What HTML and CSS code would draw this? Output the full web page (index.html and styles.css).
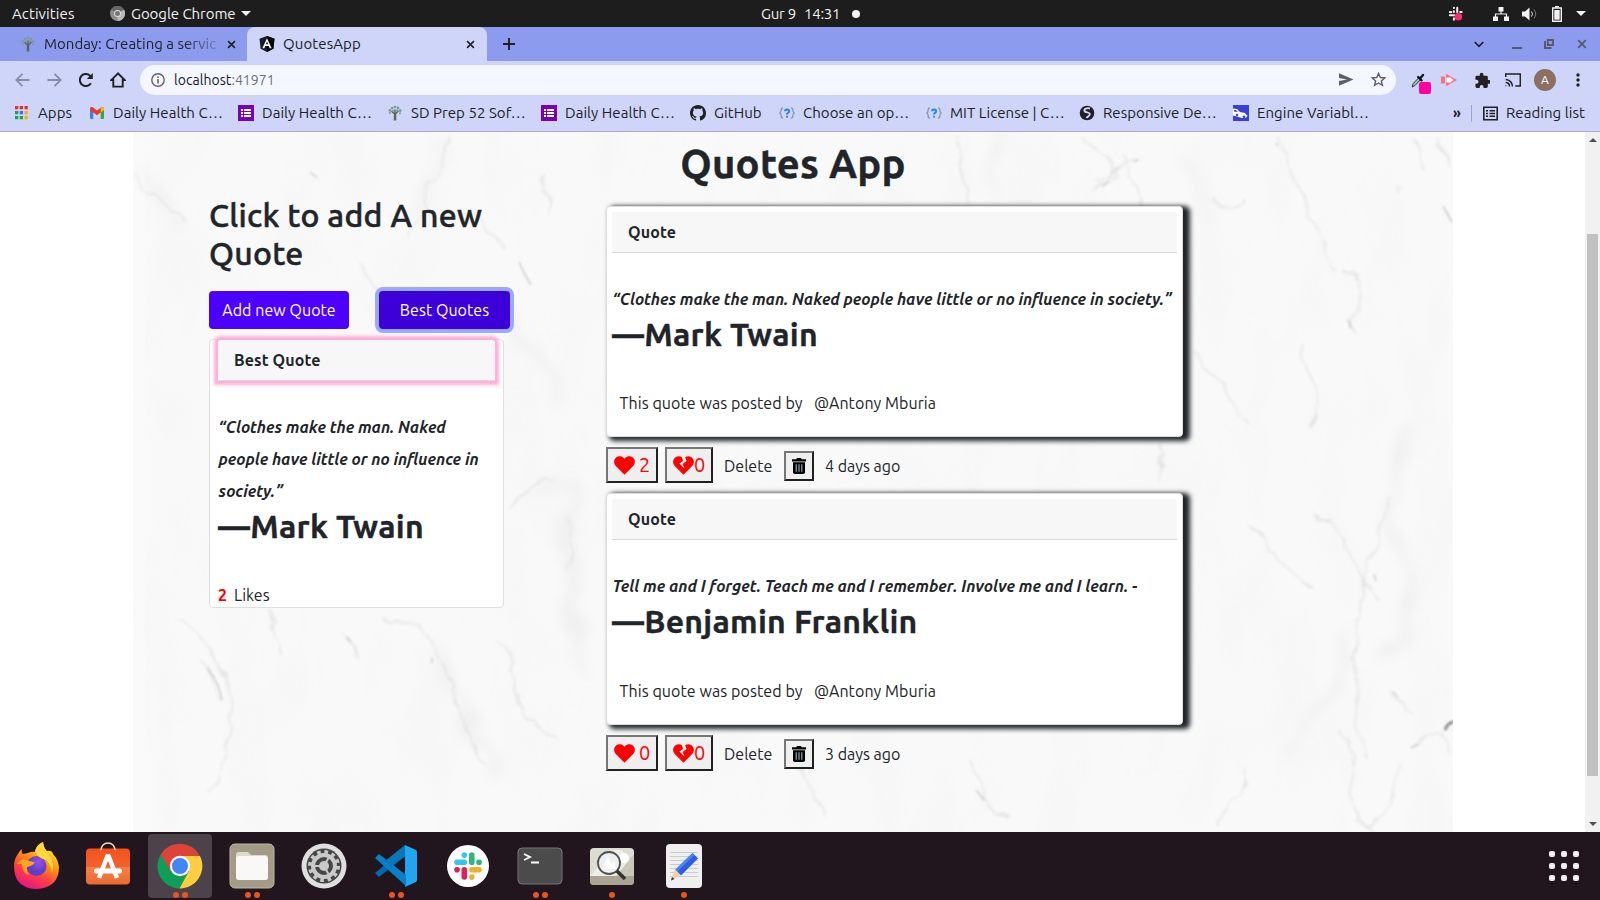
FILE: index.html
```html
<!DOCTYPE html>
<html lang="en">
<head>
<meta charset="utf-8">
<title>QuotesApp</title>
<link rel="stylesheet" href="styles.css">
</head>
<body>
<svg width="0" height="0" class="defs">
  <defs>
    <symbol id="tree" viewBox="0 0 16 16"><path d="M7.4 15.5 7.6 9 4.5 6.2M8.6 15.5 8.5 9l3-3.2M8 9V4.5" fill="none" stroke="#56665f" stroke-width="1.4"/><g fill="#7d9b92"><circle cx="3" cy="5.4" r="1.4"/><circle cx="5.2" cy="3" r="1.3"/><circle cx="8" cy="2" r="1.3"/><circle cx="11" cy="3" r="1.4"/><circle cx="13.2" cy="5.6" r="1.4"/><circle cx="2.8" cy="8" r="1"/><circle cx="13" cy="8.2" r="1"/><circle cx="6.2" cy="5.6" r="1"/><circle cx="10" cy="5.6" r="1.1"/></g></symbol>
    <symbol id="forms" viewBox="0 0 16 16"><path fill="#7700b8" d="M0 0h16v16H0z"/><path fill="#fff" d="M3 4h2v2H3zm3 0h7v2H6zM3 7h2v2H3zm3 0h7v2H6zM3 10h2v2H3zm3 0h7v2H6z"/></symbol>
    <symbol id="tag" viewBox="0 0 16 16"><path d="M4 2.8c-1.6 0-1.8.6-1.8 2S2 7.500.7 8c1.300.5 1.500 1.600 1.500 3.100s.2 2.100 1.800 2.100M12 2.800c1.600 0 1.800.6 1.800 2s.2 2.700 1.500 3.200c-1.300.5-1.500 1.600-1.500 3.100s-.2 2.100-1.800 2.100" fill="none" stroke="#8b93a8" stroke-width="1.300"/><path d="M6 6.300C6 3.800 10.200 3.800 10.200 6.200 10.200 7.800 8 7.700 8 9.500M8 10.700v1.800" fill="none" stroke="#2487e8" stroke-width="2"/></symbol>
    <symbol id="x" viewBox="0 0 10 10"><path d="m1.200 1.200 7.600 7.600m0-7.600L1.200 8.800" stroke="currentColor" stroke-width="1.800" fill="none"/></symbol>
    <symbol id="heart" viewBox="0 0 22 20"><path fill="red" d="M11 19.800 1.900 10.600C-.7 7.800-.4 3.600 2.200 1.500 4.700-.5 8.300-.1 10.300 2.100L11 2.900l.7-.8c2-2.200 5.600-2.600 8.100-.6 2.600 2.100 2.900 6.300.3 9.100z"/></symbol>
    <symbol id="broken" viewBox="0 0 22 20"><path fill="red" d="M11 19.800 1.900 10.600C-.7 7.800-.4 3.600 2.200 1.500 4.300-.2 7-.2 9.100 1L10.600 5 6.800 8l5.400 5.500-2-5 4-3.200L12.700 1.200c2-1.500 5.100-1.400 7.100.3 2.600 2.100 2.900 6.300.3 9.100z"/></symbol>
    <symbol id="trash" viewBox="0 0 14 16"><path d="M0 1.200h4.200L5 0h4l.8 1.200H14V3.400H0z"/><path d="M1 4.300h12v9.900q0 1.800-1.800 1.800H2.800Q1 16 1 14.200z"/><path d="M4.200 6.300v7.500M7 6.300v7.500M9.800 6.300v7.500" stroke="#9db4c8" stroke-width="1.100"/></symbol>
  </defs>
</svg>

<div class="desktop">
  <header class="topbar">
    <span class="activities">Activities</span>
    <svg class="mini-chrome" width="15" height="15" viewBox="0 0 16 16"><circle cx="8" cy="8" r="8" fill="#8d8d8d"/><path d="M8 8 1.100 4A8 8 0 0 1 15 4z" fill="#666"/><path d="M8 8l7-4a8 8 0 0 1-7 12z" fill="#b9b9b9"/><circle cx="8" cy="8" r="3.700" fill="#ddd"/><circle cx="8" cy="8" r="2.700" fill="#777"/></svg>
    <span class="appname">Google Chrome</span>
    <i class="caret"></i>
    <span class="date">Gur 9</span>
    <span class="clock">14:31</span>
    <i class="dot"></i>
    <svg class="tray-slack" width="16" height="16" viewBox="0 0 17 17"><g stroke="#eee" stroke-width="2.200" stroke-linecap="round"><path d="M6.300 5.500v1M9.800 2v4.500M6.300 2v.1M2 6.500h1.500M13 6.300h1.500M2 9.800h4.500M6.300 13v1.500"/></g><circle cx="11" cy="11.500" r="4" fill="#ff2d6e"/></svg>
    <svg width="16" height="14" viewBox="0 0 16 14"><path d="M5.500 0h5v4.500h-5zM0 9.500h5V14H0zM11 9.500h5V14h-5z" fill="#f2f2f2"/><path d="M8 4v3M2.500 10V7h11v3" stroke="#f2f2f2" fill="none" stroke-width="1.200"/></svg>
    <svg width="15" height="14" viewBox="0 0 15 14"><path d="M0 4.500h3L7.500.5v13L3 9.500H0z" fill="#f2f2f2"/><path d="M9.500 4.500q2 2.500 0 5" stroke="#ddd" fill="none"/><path d="M12 2.500q3.500 4.500 0 9" stroke="#777" fill="none"/></svg>
    <svg width="10" height="16" viewBox="0 0 10 16"><path d="M3 0h4v1.500H3z" fill="#f2f2f2"/><path d="M.7 2h8.600v13.300H.7z" fill="none" stroke="#f2f2f2" stroke-width="1.400"/><path d="M2.300 4h5.400v9.700H2.300z" fill="#f2f2f2"/></svg>
    <i class="caret"></i>
  </header>

  <div class="tabstrip">
    <div class="tab">
      <svg width="16" height="16"><use href="#tree"/></svg>
      <span class="tab-title fade">Monday: Creating a servic</span>
      <svg class="close" width="9" height="9"><use href="#x"/></svg>
    </div>
    <div class="tab active">
      <svg width="16" height="16" viewBox="0 0 16 16"><path d="M8 0l7.500 2.700-1.100 10L8 16l-6.400-3.300-1.100-10z" fill="#171c26"/><path d="M8 0v16l6.400-3.300 1.100-10z" fill="#05070a"/><path d="M8 2.200 3.400 12.300h1.900l.9-2.300h3.600l.9 2.300h1.900zM6.900 8.300 8 5.600l1.100 2.700z" fill="#fff" fill-rule="evenodd"/></svg>
      <span class="tab-title">QuotesApp</span>
      <svg class="close" width="9" height="9"><use href="#x"/></svg>
    </div>
    <svg class="plus" width="12" height="12" viewBox="0 0 12 12"><path d="M6 0v12M0 6h12" stroke="#202124" stroke-width="1.900"/></svg>
    <div class="winctl">
      <svg width="10" height="7" viewBox="0 0 10 7"><path d="m.7 1 4.300 4.300L9.300 1" fill="none" stroke="#202124" stroke-width="1.700"/></svg>
      <svg class="min" width="10" height="10" viewBox="0 0 10 10"><path d="M0 8h10v2H0z" fill="#555a6b"/></svg>
      <svg width="10" height="10" viewBox="0 0 10 10"><path d="M3.800 1h5.200v5H3.800z" fill="none" stroke="#555a6b" stroke-width="1.900"/><path d="M1 2v7h6.500" fill="none" stroke="#555a6b" stroke-width="1.900"/></svg>
      <svg class="wx" width="10" height="10"><use href="#x"/></svg>
    </div>
  </div>

  <div class="toolbar">
    <svg width="15" height="14" viewBox="0 0 15 14"><path d="M14.500 7H1.500M7.500.8 1.300 7l6.200 6.200" fill="none" stroke="#868da6" stroke-width="1.800"/></svg>
    <svg width="15" height="14" viewBox="0 0 15 14"><path d="M.5 7h13M7.500.8 13.700 7l-6.200 6.200" fill="none" stroke="#868da6" stroke-width="1.800"/></svg>
    <svg width="14" height="14" viewBox="0 0 14 14"><path d="M11.900 10.200A6 6 0 1 1 11.500 3.200" fill="none" stroke="#202124" stroke-width="2"/><path d="M13.800 0v6H7.800z" fill="#202124"/></svg>
    <svg width="16" height="16" viewBox="0 0 16 16"><path d="M8 1.400 1.300 8H3.300v6.600h9.400V8h2z" fill="none" stroke="#202124" stroke-width="1.900"/></svg>
    <div class="omnibox">
      <svg width="14" height="14" viewBox="0 0 14 14"><circle cx="7" cy="7" r="6.200" fill="none" stroke="#5f6368" stroke-width="1.400"/><path d="M7 6v4.500M7 3.500V5" stroke="#5f6368" stroke-width="1.600"/></svg>
      <span class="url">localhost<span class="port">:41971</span></span>
      <svg width="15" height="13" viewBox="0 0 15 13"><path d="M0 .3 14.500 6.500 0 12.700V8l8-1.500L0 5z" fill="#5a5e66"/></svg>
      <svg class="star" width="15" height="15" viewBox="0 0 15 15"><path d="m7.500 1.400 1.800 4.100 4.500.4-3.400 3 1 4.400-3.900-2.300-3.900 2.300 1-4.400-3.400-3 4.500-.4z" fill="none" stroke="#5a5e66" stroke-width="1.400"/></svg>
    </div>
    <div class="exts">
      <svg width="20" height="22" viewBox="0 0 20 22"><path d="m1.200 15 1-3.500L7.500 6l1.800 1.800L4 13.500z" fill="#9cc5ae" stroke="#263b30"/><path d="m7.200 5 3.300 3.300M9.500 6 12 3" stroke="#15151c" stroke-width="2.400" stroke-linecap="round"/><rect x="8" y="10" width="12" height="12" rx="2" fill="#ff00a0"/></svg>
      <svg width="16" height="14" viewBox="0 0 16 14"><path d="M0 3.500h4v7H0z" fill="#ff7075"/><path d="M5 .8 16 7 5 13.200z" fill="#ff7075"/><path d="M5.500 4.500h3V3.800L12.500 7l-4 3.200V9.500h-3z" fill="#fff"/></svg>
      <svg width="16" height="16" viewBox="0 0 22 22"><path fill="#202124" d="M20.500 11H19V7a2 2 0 0 0-2-2h-4V3.500a2.500 2.500 0 0 0-5 0V5H4a2 2 0 0 0-2 2v3.800h1.500a2.700 2.700 0 0 1 0 5.400H2V20a2 2 0 0 0 2 2h3.800v-1.500a2.700 2.700 0 0 1 5.400 0V22H17a2 2 0 0 0 2-2v-4h1.500a2.500 2.500 0 0 0 0-5"/></svg>
      <svg width="16" height="14" viewBox="0 0 16 14"><path d="M.7 4V1h14.600v12h-5M.7 12.500v.8M.7 9.500a4 4 0 0 1 3.800 4M.7 6.500a7 7 0 0 1 6.800 7" fill="none" stroke="#202124" stroke-width="1.500"/></svg>
      <span class="avatar">A</span>
      <svg class="kebab" width="4" height="14" viewBox="0 0 4 14"><g fill="#202124"><circle cx="2" cy="2" r="1.700"/><circle cx="2" cy="7" r="1.700"/><circle cx="2" cy="12" r="1.700"/></g></svg>
    </div>
  </div>

  <nav class="bookmarks">
    <a class="bm apps"><svg width="16" height="16" viewBox="0 0 16 16"><g><path fill="#e8321f" d="M2 1h3.300v3.300H2zM6.700 1H10v3.300H6.700zM11.500 1h3.300v3.300h-3.300z"/><path fill="#1fa34a" d="M2 6h3.300v3.300H2zM2 11h3.300v3.300H2z"/><path fill="#3d6df0" d="M6.700 6H10v3.300H6.700z"/><path fill="#1fa34a" d="M6.700 11H10v3.300H6.700z"/><path fill="#f6b300" d="M11.500 6h3.300v3.300h-3.300zM11.500 11h3.300v3.300h-3.300z"/></g></svg><span>Apps</span></a>
    <a class="bm"><svg width="16" height="16" viewBox="0 0 16 16"><path fill="#3f7df0" d="M1 4.500 4.300 7v7H2q-1 0-1-1z"/><path fill="#2ba84f" d="M15 4.500 11.700 7v7H14q1 0 1-1z"/><path fill="#e9392a" d="M1 5V3.500C1 2 2.600 1.500 3.700 2.300L8 5.500l4.300-3.200C13.400 1.500 15 2 15 3.500V5L8 10.200z"/><path fill="#fbbc04" d="M11.700 2.700C13 1.500 15 2 15 3.500V5l-3.300 2.500z"/></svg><span>Daily Health C…</span></a>
    <a class="bm"><svg width="16" height="16"><use href="#forms"/></svg><span>Daily Health C…</span></a>
    <a class="bm"><svg width="16" height="16"><use href="#tree"/></svg><span>SD Prep 52 Sof…</span></a>
    <a class="bm"><svg width="16" height="16"><use href="#forms"/></svg><span>Daily Health C…</span></a>
    <a class="bm"><svg width="16" height="16" viewBox="0 0 16 16"><path fill="#202124" d="M8 0C3.580 0 0 3.580 0 8c0 3.540 2.290 6.530 5.470 7.590.4.070.55-.17.55-.38 0-.19-.01-.82-.01-1.490-2.010.37-2.530-.49-2.690-.94-.09-.23-.48-.94-.82-1.130-.28-.15-.68-.52-.01-.53.63-.01 1.080.58 1.230.82.72 1.210 1.870.87 2.330.66.07-.52.28-.87.51-1.070-1.780-.2-3.640-.89-3.640-3.950 0-.87.31-1.590.82-2.150-.08-.2-.36-1.020.08-2.120 0 0 .67-.21 2.200.82.64-.18 1.320-.27 2-.27s1.360.09 2 .27c1.530-1.040 2.200-.82 2.200-.82.44 1.100.16 1.920.08 2.120.51.56.82 1.270.82 2.150 0 3.070-1.870 3.750-3.650 3.950.29.25.54.73.54 1.480 0 1.070-.01 1.930-.01 2.200 0 .21.15.46.55.38A8.010 8.010 0 0 0 16 8c0-4.420-3.580-8-8-8"/></svg><span>GitHub</span></a>
    <a class="bm"><svg width="16" height="16"><use href="#tag"/></svg><span>Choose an op…</span></a>
    <a class="bm"><svg width="16" height="16"><use href="#tag"/></svg><span>MIT License | C…</span></a>
    <a class="bm"><svg width="16" height="16" viewBox="0 0 16 16"><circle cx="8" cy="8" r="7.300" fill="#202124"/><path d="M11 3.500C8 2.500 4.500 4 5.500 6s5 .8 5.300 3-2 2.300-3.300 4" stroke="#ced5f9" stroke-width="1.900" fill="none"/></svg><span>Responsive De…</span></a>
    <a class="bm"><svg width="16" height="16" viewBox="0 0 16 16"><path fill="#3a3fdc" d="M0 0h16v16H0z"/><path d="M0 3.500 4 4l3 3 5 1 2.500 3-1.500 1.500-4 .5-5-1.500-4-1z" fill="#fff"/><circle cx="11" cy="11.700" r="1.300" fill="#3a3fdc"/><circle cx="4" cy="10" r="1.200" fill="#3a3fdc"/><path d="M1 5h2l1.800 2-3.800-.6z" fill="#3a3fdc"/></svg><span>Engine Variabl…</span></a>
    <b class="more">»</b>
    <a class="bm reading"><svg width="15" height="15" viewBox="0 0 15 15"><path d="M.8 1.300h13.400v12.400H.8z" fill="none" stroke="#202124" stroke-width="1.600"/><path d="M3 4.800h2M6.500 4.800H12M3 7.500h2M6.500 7.500H12M3 10.200h2M6.500 10.200H12" stroke="#202124" stroke-width="1.500"/></svg><span>Reading list</span></a>
  </nav>

  <div class="viewport">
    <main class="page">
      <svg class="marble" viewBox="133 132 1320 700" width="1320" height="700">
        <defs><filter id="soft" x="-20%" y="-20%" width="140%" height="140%"><feTurbulence type="fractalNoise" baseFrequency=".04" numOctaves="3" seed="3"/><feDisplacementMap in="SourceGraphic" scale="16" xChannelSelector="R" yChannelSelector="G"/><feGaussianBlur stdDeviation="1.500"/></filter><filter id="fine" x="-20%" y="-20%" width="140%" height="140%"><feGaussianBlur stdDeviation="1"/></filter><filter id="wide" x="-30%" y="-30%" width="160%" height="160%"><feTurbulence type="fractalNoise" baseFrequency=".02" numOctaves="3" seed="5"/><feDisplacementMap in="SourceGraphic" scale="50" xChannelSelector="R" yChannelSelector="G"/><feGaussianBlur stdDeviation="6"/></filter>
        <filter id="grain" x="0" y="0" width="100%" height="100%"><feTurbulence type="fractalNoise" baseFrequency=".022 .009" numOctaves="4" seed="8"/><feColorMatrix values="0 0 0 0 .5  0 0 0 0 .5  0 0 0 0 .5  .5 0 0 0 -.22"/></filter></defs>
        <path fill="#f9f9f9" d="M133 132h1320v700H133z"/>
        <path fill="#000" filter="url(#grain)" opacity=".2" d="M133 132h1320v700H133z"/>
        <g filter="url(#wide)" fill="none" stroke="#f0f0f0" stroke-width="10">
          <path d="M135 170q30 30 55 55M440 135q-10 50-30 80M505 300q30 60 60 110M530 490q50-30 40 60t20 120M1000 134q-15 60 5 70M1180 160q40 20 25 60M1410 430q-30 60-10 120t-10 110M1340 620q10 50-20 90t-40 30M430 650q40 40 60 130"/>
        </g>
        <g filter="url(#soft)" fill="none" stroke="#d6d6d6" stroke-width="1.600" opacity=".65">
          <path d="M133 172q20 25 52 50M447 135q-2 30-16 50l-20 50M358 260q5 20 18 27M475 210l30 40M545 178q8 15 4 40M380 615q20 10 30 8t25 25 25 65 28 50M204 662q14 16 17 38M345 632l14 30M270 610q10 30 12 45M500 640q20 35 20 60t40 40M565 520q15 20 0 50M510 510q25-30 45-30M180 620q40 30 50 70t-20 100M1080 140q30 20 35 35l-20 15M1122 155q20 50 26 85M1100 180q25-15 35-20M1280 135q8 25 20 55t25 60 12 20M1345 268q20 20 17 45l-12 12 2 8M1245 200q-20 15-30 0M1193 350q35 40 55 75M1315 510q20 20 45 60t15 25M1248 525q30 40 65 65M1386 500q-5 40-15 65t-15 80 10 110M1340 730q20 30 12 50t20 50M1391 690q10 15 22 25M1415 745l20-12 15 20M1400 760l-12 45q-15 30-30 15M1246 770q-4 20-16 32t-10 25M1395 195q-5-12 8-8M1415 140l8 30M1440 135l8 30M970 760q20 50 40 60M800 770q20 30 25 50M955 135q10 60 15 70M1300 345q25 60 10 80M1160 440q5 20 3 40"/>
        </g>
        <g filter="url(#fine)" fill="none" stroke="#bdbdbd" stroke-width="1.600" opacity=".7">
          <path d="M519 262q5 12 12 23M310 172l7 6M207 668q13 16 15 32M1443 206l9 16M1348 320l3 8M1109 181l-7 6M1134 162l4-3M1393 692l5 5M1411 748l7-4M1374 574l2 7M1276 143l2 3M347 637l4 5M432 658v5M976 790l8 10"/>
          <path stroke="#666" stroke-width="3" d="M1445 730q3-8 9-8"/>
        </g>
        <path d="M133 132h12v700h-12z" fill="#fff" opacity=".25"/>
      </svg>
      <h1>Quotes App</h1>
      <div class="columns">
        <section class="left">
          <h2>Click to add A new Quote</h2>
          <div class="buttons"><button class="btn add">Add new Quote</button><button class="btn best">Best Quotes</button></div>
          <article class="best-card">
            <div class="card-header pink">Best Quote</div>
            <p class="quote">“Clothes make the man. Naked<br>people have little or no influence in<br>society.”</p>
            <p class="author">—Mark Twain</p>
            <p class="likes"><b>2</b><span>Likes</span></p>
          </article>
        </section>
        <section class="right">
          <article class="post">
            <div class="card-header">Quote</div>
            <p class="quote">“Clothes make the man. Naked people have little or no influence in society.”</p>
            <p class="author">—Mark Twain</p>
            <p class="posted"><span>This quote was posted by</span><span>@Antony Mburia</span></p>
          </article>
          <div class="actions">
            <button class="vote up"><svg width="21" height="19"><use href="#heart"/></svg><span>2</span></button>
            <button class="vote down"><svg width="21" height="19"><use href="#broken"/></svg><span>0</span></button>
            <span class="del">Delete</span>
            <button class="trash"><svg width="14" height="16"><use href="#trash"/></svg></button>
            <span class="ago">4 days ago</span>
          </div>
          <article class="post tall">
            <div class="card-header">Quote</div>
            <p class="quote">Tell me and I forget. Teach me and I remember. Involve me and I learn. -</p>
            <p class="author">—Benjamin Franklin</p>
            <p class="posted"><span>This quote was posted by</span><span>@Antony Mburia</span></p>
          </article>
          <div class="actions">
            <button class="vote up"><svg width="21" height="19"><use href="#heart"/></svg><span>0</span></button>
            <button class="vote down"><svg width="21" height="19"><use href="#broken"/></svg><span>0</span></button>
            <span class="del">Delete</span>
            <button class="trash"><svg width="14" height="16"><use href="#trash"/></svg></button>
            <span class="ago">3 days ago</span>
          </div>
        </section>
      </div>
    </main>
    <div class="scrollbar"><i class="arrow up-arrow"></i><i class="thumb"></i><i class="arrow down-arrow"></i></div>
  </div>

  <footer class="dock">
    <div class="app"><svg width="48" height="48" viewBox="0 0 48 48"><defs><linearGradient id="ff" x1=".8" y1="0" x2=".3" y2="1"><stop offset="0" stop-color="#fff44f"/><stop offset=".4" stop-color="#ff980e"/><stop offset=".7" stop-color="#ff3d47"/><stop offset="1" stop-color="#e31587"/></linearGradient><radialGradient id="fp" cx=".6" cy=".3"><stop offset="0" stop-color="#a04de8"/><stop offset="1" stop-color="#5b3fc4"/></radialGradient></defs><path fill="url(#ff)" d="M2 24Q2 17 6 12q1-3 4-5-1 4 1 5l5-1q4-2 7-1 1-7 8-10 0 5 4 9 5-1 6 3 5 5 6 13 0 21-23 22Q2 46 2 24z"/><circle cx="24.500" cy="24" r="10" fill="url(#fp)"/><path fill="#ffa41c" d="M5 22q4-6 9-4 7 2 9 2-2 4-8 5-1 5 3 8-8-1-8-11z"/><path fill="#ffd83c" d="M31 0q1 8 7 14 5 8 2 17-1-9-6-13-8-2-11-8 1-7 8-10z"/></svg></div>
    <div class="app"><svg width="48" height="48" viewBox="0 0 48 48"><defs><linearGradient id="sw" x2="0" y2="1"><stop offset="0" stop-color="#f4511e"/><stop offset=".5" stop-color="#f2622c"/><stop offset=".5" stop-color="#f58048"/><stop offset="1" stop-color="#ec6a30"/></linearGradient></defs><rect x="2" y="6.500" width="44" height="36" rx="4" fill="url(#sw)"/><path d="M17 8q1-7 7-7t7 7" fill="none" stroke="#f8dcb8" stroke-width="1.500"/><path d="M24 12.500 15 36M24 12.500 33 36" stroke="#fff" stroke-width="4.500"/><rect x="10" y="26.500" width="28" height="5" rx="2.500" fill="#fff"/></svg></div>
    <div class="app current two"><svg width="48" height="48" viewBox="0 0 48 48"><path d="M24 24V14h19.800A22.500 22.500 0 0 0 4.500 12.700L14 30z" fill="#db4437"/><path d="M4.500 12.700A22.500 22.500 0 0 0 23.500 46.500L33 30H15z" fill="#0f9d58"/><path d="M24 14h20a22.500 22.500 0 0 1-20.500 32.500L33 29z" fill="#ffcd40"/><circle cx="24" cy="24" r="10.200" fill="#f4f4f4"/><circle cx="24" cy="24" r="8" fill="#4285f4"/></svg></div>
    <div class="app two"><svg width="48" height="48" viewBox="0 0 48 48"><rect x="2" y="2" width="44" height="44" rx="5" fill="#a39b86" stroke="#bcb6a5"/><path d="M8 13q0-3 3-3h9l3 3h14q3 0 3 3v19q0 3-3 3H11q-3 0-3-3z" fill="#ddd9cc"/><rect x="8" y="14" width="32" height="24" rx="3" fill="#f9f8f6"/></svg></div>
    <div class="app"><svg width="48" height="48" viewBox="0 0 48 48"><circle cx="24" cy="24" r="22.500" fill="#dfdfdf"/><circle cx="24" cy="24" r="17.500" fill="#464646"/><circle cx="24" cy="24" r="14" fill="none" stroke="#c9c9c9" stroke-width="4" stroke-dasharray="3.600 3.730"/><circle cx="24" cy="24" r="11" fill="#464646" stroke="#c9c9c9" stroke-width="4"/><path d="M24 24 14 24M24 24l5-9M24 24l5 9" stroke="#c9c9c9" stroke-width="2"/><circle cx="24" cy="24" r="5" fill="#c9c9c9"/></svg></div>
    <div class="app two"><svg width="48" height="48" viewBox="0 0 48 48"><path d="M3 31l4 4L35 13V4z" fill="#0069ad"/><path d="M33 3l11 5q1 1 1 2v28q0 1-1 2l-11 5z" fill="#22a5f1"/><path d="M3 16l4-4 27 21v11z" fill="#087fc9"/><path d="M33 3v11L19 24l-6-5z" fill="#0876b9"/></svg></div>
    <div class="app"><svg width="48" height="48" viewBox="0 0 48 48"><circle cx="24" cy="24" r="21" fill="#fff"/><g stroke-width="5.600" stroke-linecap="round"><path stroke="#36c5f0" d="M20.300 13v.1M13 20.300h7.300"/><path stroke="#2eb67d" d="M27.800 13v7.300M35 20.300h.1"/><path stroke="#ecb22e" d="M27.800 27.800H35M27.800 35v.1"/><path stroke="#e01e5a" d="M20.300 27.800V35M13 27.800h.1"/></g></svg></div>
    <div class="app two"><svg width="48" height="48" viewBox="0 0 48 48"><rect x="2" y="6" width="44" height="36" rx="4" fill="#4b4b4b" stroke="#777"/><path d="m8 12 6 3-6 3M15 20.500h8" fill="none" stroke="#fff" stroke-width="1.800"/></svg></div>
    <div class="app one"><svg width="48" height="48" viewBox="0 0 48 48"><rect x="2" y="6" width="44" height="37" rx="4" fill="#dcdccf"/><path d="M2 34 24 8h10L46 22v13H2z" fill="#eeeee6"/><path d="M28 34 46 12v22z" fill="#c9c7b7"/><path d="M2 34h44v5q0 4-4 4H6q-4 0-4-4z" fill="#aaa592"/><circle cx="36" cy="16" r="5" fill="#fff"/><circle cx="21" cy="21" r="11" fill="#eef0ee" stroke="#505050" stroke-width="1.800"/><path d="m14 27 6-13 3 8 3-3 2 8z" fill="#fff"/><path d="m29 29 8 8" stroke="#333" stroke-width="3.500"/></svg></div>
    <div class="app one"><svg width="48" height="48" viewBox="0 0 48 48"><rect x="6" y="2" width="36" height="44" rx="4" fill="#efefef"/><path d="M10 10.500h28M10 14.500h28M10 18.500h28M10 22.500h28M10 26.500h28M10 30.500h28M10 34.500h28" stroke="#ccc"/><path d="m15 27 5.500 6L11 38.500z" fill="#f7cfa6"/><path d="m11 38.500 1-3.500 2.500 2z" fill="#333"/><path d="m15.500 27.500 17-16.500 5.500 5.500-17 17z" fill="#2b5fe0"/><path d="m15.500 27.500 17-16.500 2 2-17 16.500z" fill="#4c82f5"/></svg></div>
    <div class="grid-btn"><i></i><i></i><i></i><i></i><i></i><i></i><i></i><i></i><i></i></div>
  </footer>
</div>
</body>
</html>
```

FILE: styles.css
```css
* { box-sizing: border-box; }
body { margin: 0; font-family: Ubuntu, "Open Sans", "Noto Sans", sans-serif; color: #212529; overflow: hidden; }
h1, h2, p { margin: 0; }
svg { display: block; flex: none; }
button { font-family: inherit; padding: 0; cursor: pointer; }
.defs { position: absolute; }
.desktop { width: 1600px; height: 900px; display: flex; flex-direction: column; background: #fff; position: relative; z-index: 0; }

/* system bar */
.topbar { height: 27px; background: #1d1d1d; color: #f2f2f2; font-size: 15px; display: grid; align-items: center; white-space: nowrap;
  grid-template-columns: 98px 21px 110px 520px 43px 48px 596px 45px 29px 30px 24px 20px; padding-left: 12px; line-height: 26px; }
.activities { letter-spacing: .1px; }
.date, .clock { letter-spacing: -.25px; }
.appname { letter-spacing: -.05px; }
.caret { border: 5px solid transparent; border-top-color: #f2f2f2; border-bottom: 0; width: 10px; }
.dot { width: 8px; height: 8px; border-radius: 50%; background: #f2f2f2; }

/* tabs */
.tabstrip { height: 34px; background: #8c9bee; display: flex; align-items: center; font-size: 15px; color: #202124; }
.tab { width: 247px; height: 34px; display: flex; align-items: center; padding: 0 11px 0 20px; }
.tab.active { width: 240px; background: #ced5f9; border-radius: 8px 8px 0 0; padding: 0 12px; }
.tab-title { flex: 1; margin-left: 8px; white-space: nowrap; overflow: hidden; letter-spacing: .1px; padding-bottom: 1px; }
.fade { margin-right: 8px; letter-spacing: 0; -webkit-mask-image: linear-gradient(90deg, #000 80%, rgba(0,0,0,.15)); mask-image: linear-gradient(90deg, #000 80%, rgba(0,0,0,.15)); }
.plus { margin-left: 16px; }
.winctl { margin-left: auto; margin-right: 13px; display: grid; grid-template-columns: 38px 32px 33px 10px; align-items: center; }
.wx { color: #555a6b; }

/* toolbar */
.toolbar { height: 37px; background: #ced5f9; display: flex; align-items: center; padding: 0 20px 0 15px; }
.toolbar > svg { margin-right: 17px; }
.toolbar > svg:nth-of-type(4) { margin-right: 14px; }
.omnibox { width: 1256px; height: 30px; border-radius: 15px; background: #f4f7ff; display: flex; align-items: center; padding: 0 10px 0 11px; font-size: 14px; }
.url { flex: 1; margin-left: 9px; letter-spacing: .05px; color: #17181b; }
.port { color: #6b6f76; }
.star { margin-left: 17px; }
.exts { display: grid; grid-template-columns: 30px 33px 31px 29px 42px 4px; align-items: center; padding-left: 15px; }
.exts svg:first-child { margin-top: 6px; }
.avatar { width: 22px; height: 22px; border-radius: 50%; background: #8d6e63; color: #fff; font-size: 12px; line-height: 22px; text-align: center; }

/* bookmarks */
.bookmarks { height: 36px; background: #ced5f9; border-bottom: 1px solid #a3abce; padding: 0 0 3px 13px; display: grid; align-items: center;
  grid-template-columns: 76px 149px 149px 154px 149px 89px 147px 153px 154px 220px 18px 128px; font-size: 15px; color: #202124; }
.bookmarks { height: 34px; }
.bm { display: flex; align-items: center; gap: 8px; white-space: nowrap; line-height: 17px; }
.bm span { padding-bottom: 2px; letter-spacing: .05px; }
.apps { gap: 9px; }
.more { font-size: 14px; line-height: 18px; padding-bottom: 1px; }
.reading { border-left: 1px solid #9aa3cc; padding-left: 11px; height: 17px; }

/* page */
.viewport { height: 700px; display: flex; justify-content: space-between; padding-left: 133px; }
.page { width: 1320px; height: 700px; position: relative; overflow: hidden; padding-top: 8px; }
.marble { position: absolute; inset: 0; z-index: -1; }
h1 { font-size: 40px; line-height: 48px; text-align: center; font-weight: 700; letter-spacing: .25px; -webkit-text-stroke: .4px #212529; }
.columns { display: flex; padding: 8px 0 0 76px; }
.left { width: 397px; }
h2 { width: 295px; font-size: 32px; line-height: 38px; font-weight: 500; -webkit-text-stroke: .5px #212529; letter-spacing: .25px; margin-bottom: 19px; }
.buttons { display: flex; gap: 30px; }
.btn { height: 38px; border: 0; border-radius: 4px; color: #fff; font-size: 16px; background: #4c00ff; letter-spacing: .05px; }
.add { width: 140px; }
.best { width: 131px; background: #3d00d9; box-shadow: 0 0 0 4px #98a9ff; }
.best-card { width: 295px; height: 269px; margin-top: 10px; border: 1px solid #dfdfdf; border-radius: 4px; background: #fff; padding: 0 8px; }
.card-header { height: 41px; background: #f7f7f7; border-bottom: 1px solid #d9d9d9; border-radius: 3px 3px 0 0; padding-left: 16px; font-weight: 700; font-size: 16px; line-height: 40px; letter-spacing: .1px; }
.pink { box-shadow: 0 0 3px 4px #ffb0d8; }
.quote { font-size: 16px; font-weight: 700; font-style: italic; line-height: 32px; white-space: nowrap; padding: 30px 0 0 .6px; }
.author { font-size: 32px; font-weight: 700; line-height: 38px; white-space: nowrap; letter-spacing: .25px; -webkit-text-stroke: .3px #212529; }
.likes { display: flex; font-size: 16px; line-height: 24px; margin-top: 38px; }
.likes b { color: #f00; width: 16px; }
.right { width: 578px; padding-top: 10px; }
.post { height: 231px; border: 1px solid #dcdcdc; border-radius: 4px; background: #fff; padding: 5px; margin-right: 1px; box-shadow: 5px 2px 5px 1.500px #212529; }
.tall { height: 232px; }
.posted { display: flex; font-size: 16px; line-height: 24px; margin: 38px 0 0 7.500px; white-space: nowrap; letter-spacing: .08px; }
.tall .posted { margin-top: 39px; }
.posted span:first-child { width: 194.500px; }
.actions { display: flex; align-items: center; height: 36px; margin: 10px 0; font-size: 16px; }
.vote { display: flex; align-items: center; height: 36px; border: 2px solid; border-color: #767676 #212121 #212121 #767676; background: #efefef; color: red; font-size: 20px; line-height: 30px; padding-left: 6px; }
.up { width: 52px; gap: 4px; margin-right: 7px; }
.down { width: 48px; margin-right: 11px; }
.del { width: 60px; padding-top: 1px; }
.ago { padding-top: 1px; }
.trash { width: 30px; height: 30px; border: 2px solid; border-color: #767676 #212121 #212121 #767676; background: #efefef; padding: 0 0 0 6px; margin: 1px 11px 0 0; }
.scrollbar { width: 15px; background: #f1f1f1; display: flex; flex-direction: column; align-items: center; padding: 6px 0; }
.arrow { border: 4px solid transparent; width: 8px; }
.up-arrow { border-bottom-color: #505050; border-top: 0; margin-bottom: 92px; }
.thumb { width: 11px; height: 542px; background: #c1c1c1; }
.down-arrow { border-top-color: #505050; border-bottom: 0; margin-top: 46px; }

/* dock */
.dock { height: 68px; background: #21151e; display: flex; align-items: center; gap: 8px; padding: 0 21px 0 4px; }
.app { width: 64px; height: 64px; border-radius: 4px; display: grid; place-items: center; position: relative; }
.current { background: #4b424a; }
.one::after, .two::after { content: ""; position: absolute; bottom: 0; left: 29px; width: 6px; height: 6px; border-radius: 50%; background: #e95420; }
.two::after { left: 25px; box-shadow: 9px 0 #e95420; }
.grid-btn { margin-left: auto; display: grid; grid-template-columns: repeat(3, 6px); gap: 6px; }
.grid-btn i { height: 6px; border-radius: 2px; background: #f2f0f1; }
```
